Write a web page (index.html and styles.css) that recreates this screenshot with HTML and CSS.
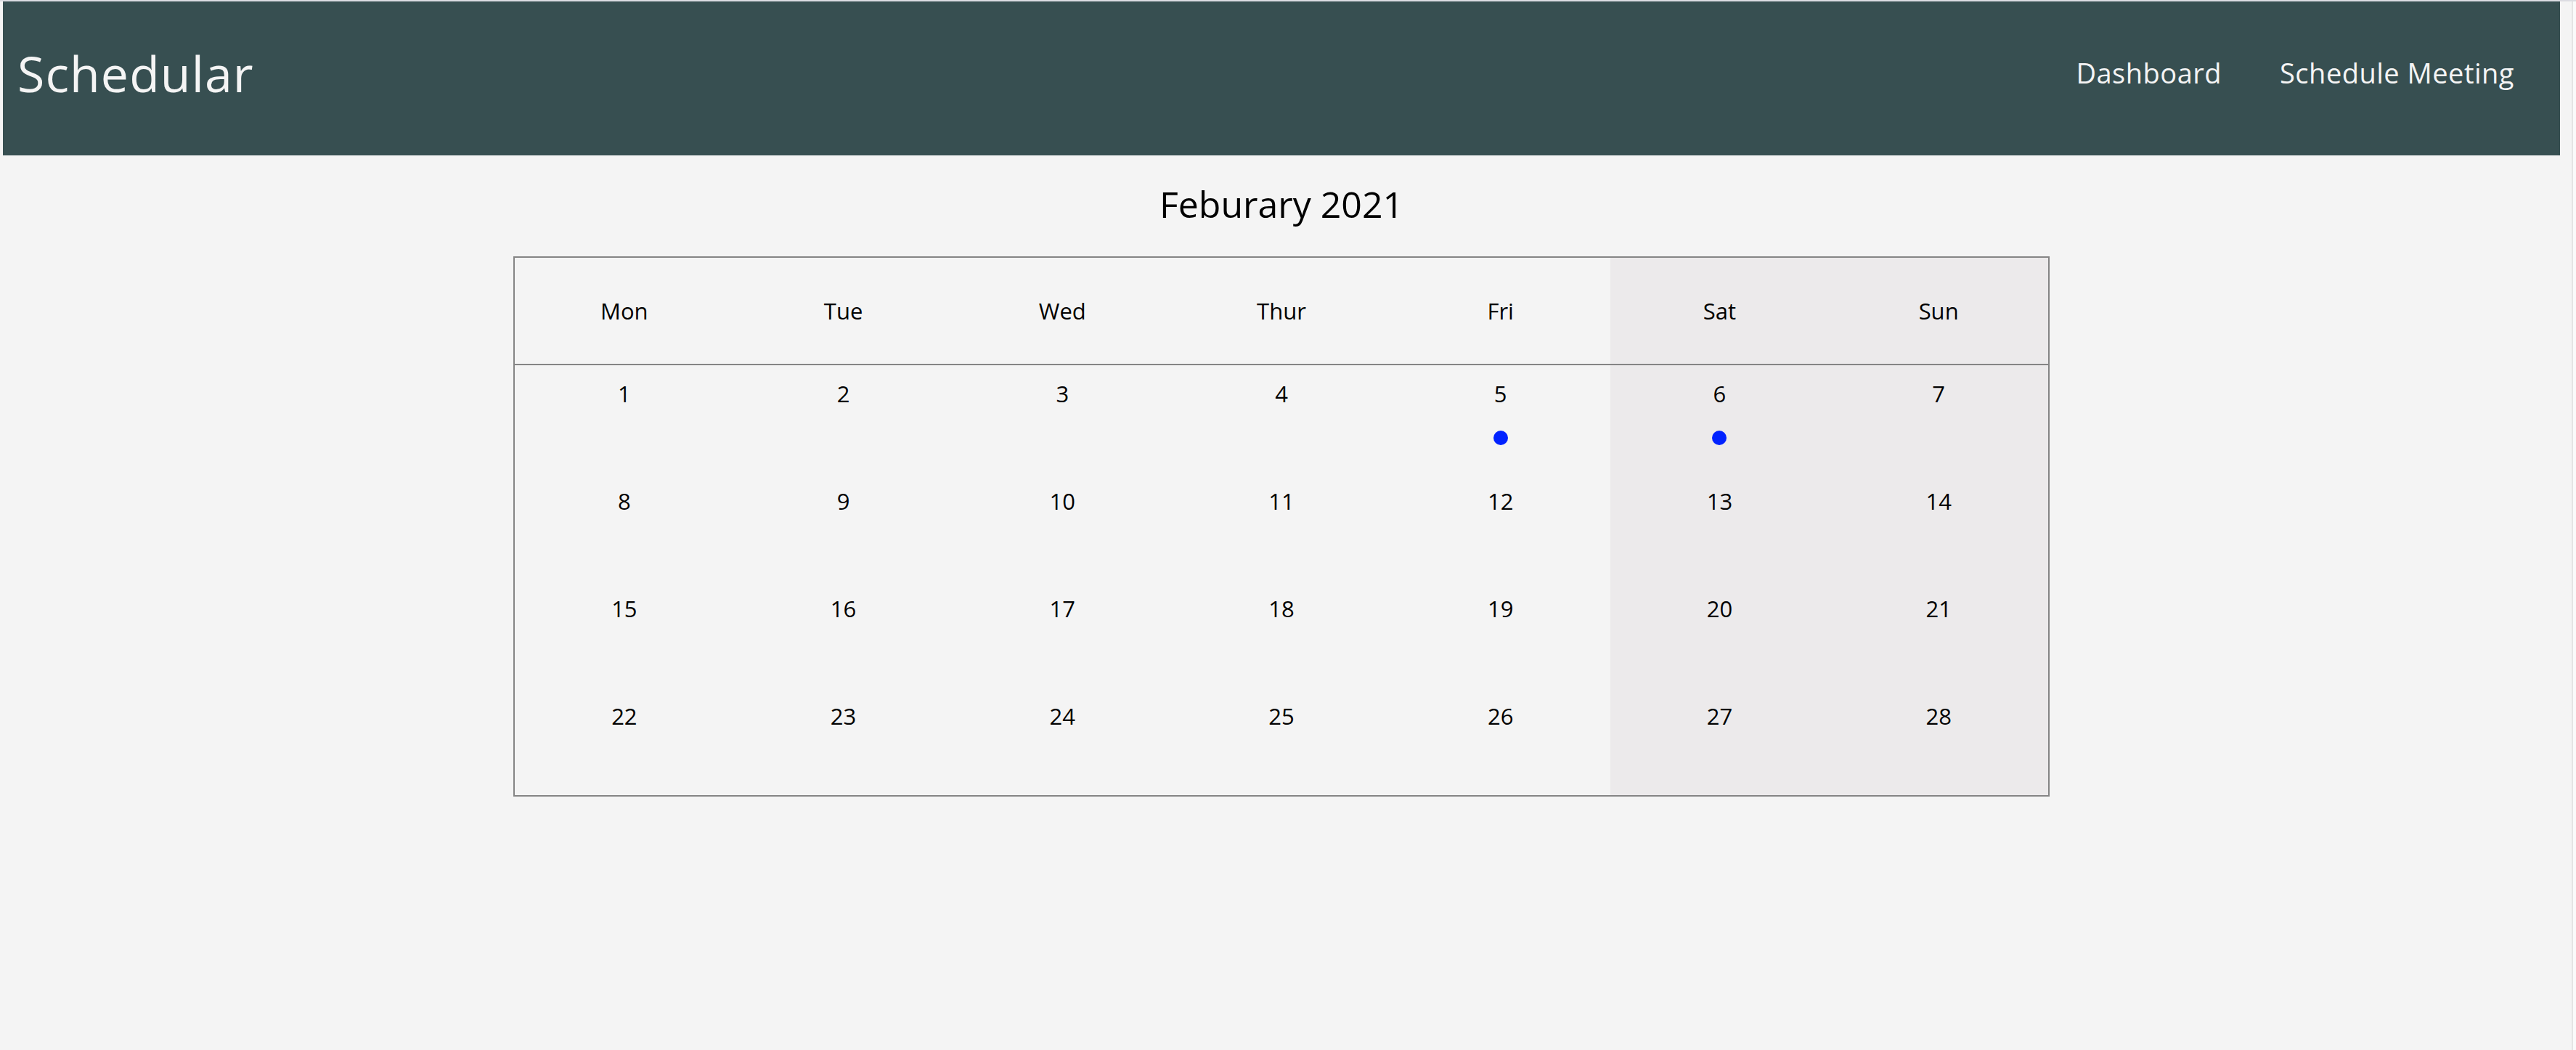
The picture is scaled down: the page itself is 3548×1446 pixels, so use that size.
FILE: index.html
```html
<!DOCTYPE html>
<html lang="en">
<head>
<meta charset="utf-8">
<title>Schedular</title>
<link rel="stylesheet" href="styles.css">
</head>
<body>
<div class="topline"></div>
<div class="frame">
  <div class="page">
    <header class="navbar">
      <div class="brand">Schedular</div>
      <nav class="nav">
        <a class="nav-link" href="#">Dashboard</a>
        <a class="nav-link" href="#">Schedule Meeting</a>
      </nav>
    </header>
    <main class="main">
      <h1 class="month-title">Feburary 2021</h1>
      <div class="calendar">
        <div class="head-cell">Mon</div>
        <div class="head-cell">Tue</div>
        <div class="head-cell">Wed</div>
        <div class="head-cell">Thur</div>
        <div class="head-cell">Fri</div>
        <div class="head-cell weekend">Sat</div>
        <div class="head-cell weekend">Sun</div>

        <div class="day">1</div>
        <div class="day">2</div>
        <div class="day">3</div>
        <div class="day">4</div>
        <div class="day">5<span class="dot"></span></div>
        <div class="day weekend">6<span class="dot"></span></div>
        <div class="day weekend">7</div>

        <div class="day">8</div>
        <div class="day">9</div>
        <div class="day">10</div>
        <div class="day">11</div>
        <div class="day">12</div>
        <div class="day weekend">13</div>
        <div class="day weekend">14</div>

        <div class="day">15</div>
        <div class="day">16</div>
        <div class="day">17</div>
        <div class="day">18</div>
        <div class="day">19</div>
        <div class="day weekend">20</div>
        <div class="day weekend">21</div>

        <div class="day">22</div>
        <div class="day">23</div>
        <div class="day">24</div>
        <div class="day">25</div>
        <div class="day">26</div>
        <div class="day weekend">27</div>
        <div class="day weekend">28</div>
      </div>
    </main>
  </div>
  <div class="gutter"></div>
</div>
</body>
</html>
```

FILE: styles.css
```css
* {
  box-sizing: border-box;
}

html, body {
  margin: 0;
  padding: 0;
}

body {
  background: #f4f4f4;
  font-family: "Open Sans", "Noto Sans", "DejaVu Sans", sans-serif;
  color: #000;
  min-height: 100vh;
  display: flex;
  flex-direction: column;
}

.topline {
  height: 2px;
  background: #dcdce2;
  flex: none;
}

.frame {
  flex: 1;
  display: flex;
}

.page {
  flex: 1;
  padding: 0 16px 0 4px;
}

.gutter {
  width: 6px;
  flex: none;
  background: #fafafa;
  border-left: 2px solid #e4e4e4;
}

.navbar {
  height: 212px;
  background: #374f51;
  color: #f4f4f4;
  display: flex;
  align-items: center;
  justify-content: space-between;
  padding: 0 63px 16px 20px;
}

.brand {
  font-size: 68px;
  line-height: 1;
  letter-spacing: 1.1px;
  margin-top: 1px;
}

.nav {
  display: flex;
  gap: 80px;
}

.nav-link {
  color: #f4f4f4;
  text-decoration: none;
  font-size: 38px;
  letter-spacing: 0.5px;
  line-height: 1;
}

.main {
  display: flex;
  flex-direction: column;
  align-items: center;
}

.month-title {
  margin: 33px 0 38px;
  font-size: 50px;
  font-weight: 400;
  line-height: 68px;
}

.calendar {
  width: 2116px;
  border: 2px solid #858585;
  display: grid;
  grid-template-columns: repeat(7, 1fr);
  grid-template-rows: 148px repeat(4, 148px);
}

.head-cell {
  display: flex;
  align-items: center;
  justify-content: center;
  font-size: 31px;
  border-bottom: 2px solid #858585;
}

.day {
  display: flex;
  flex-direction: column;
  align-items: center;
  padding-top: 18px;
  font-size: 31px;
  line-height: 42px;
}

.weekend {
  background: #eceaeb;
}

.dot {
  width: 20px;
  height: 20px;
  border-radius: 50%;
  background: #0022ff;
  margin-top: 30px;
}
```
